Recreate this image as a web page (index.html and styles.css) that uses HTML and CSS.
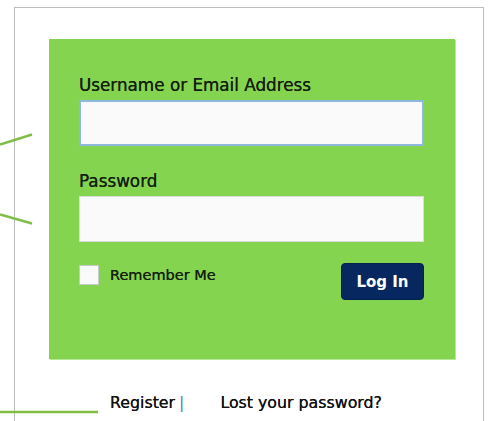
FILE: index.html
```html
<!DOCTYPE html>
<html lang="en">
<head>
<meta charset="utf-8">
<title>Log In</title>
<link rel="stylesheet" href="styles.css">
</head>
<body>
<div class="page">
  <div class="frame">
    <form class="login">
      <label class="field-label" for="user">Username or Email Address</label>
      <input class="field field-focus" id="user" type="text">
      <label class="field-label pw-label" for="pass">Password</label>
      <input class="field" id="pass" type="password">
      <div class="actions">
        <label class="remember"><span class="box"></span>Remember Me</label>
        <button class="submit" type="button">Log In</button>
      </div>
    </form>
    <p class="nav"><a class="link">Register</a><span class="sep">|</span><a class="link lost">Lost your password?</a></p>
  </div>
  <svg class="callouts" width="110" height="421" viewBox="0 0 110 421">
    <line x1="0" y1="137.5" x2="32" y2="127.5"/>
    <line x1="0" y1="207.5" x2="32" y2="216.5"/>
    <line x1="0" y1="405" x2="98" y2="405"/>
  </svg>
</div>
</body>
</html>
```
FILE: styles.css
```css
html, body {
  margin: 0;
  padding: 0;
  background: #fff;
  height: 100%;
  overflow: hidden;
}

.page {
  position: relative;
  height: 421px;
  font-family: "DejaVu Sans", Verdana, sans-serif;
  color: #111;
}

.frame {
  margin: 7px 0 0 14px;
  width: 470px;
  height: 414px;
  border: 1px solid #bdbdbd;
  border-bottom: none;
  box-sizing: border-box;
  padding: 31px 0 0 34px;
}

.login {
  width: 406px;
  height: 320px;
  box-sizing: border-box;
  background: #84d44f;
  padding: 37px 31px 0 30px;
  display: flex;
  flex-direction: column;
  box-shadow: 1px 1px 0 #b6e89a;
}

.field-label {
  font-size: 16.8px;
  line-height: 18px;
  color: #14200d;
  margin-bottom: 6px;
  text-shadow: 0 0 0.4px #14200d;
}

.pw-label {
  margin-top: 26px;
}

.field {
  height: 46px;
  box-sizing: border-box;
  margin: 0;
  border: 1px solid #dcdcdc;
  background: #fafafa;
  outline: none;
}

.field-focus {
  border: 2px solid #8fb8df;
}

.actions {
  margin-top: 21px;
  display: flex;
  justify-content: space-between;
  align-items: flex-start;
}

.remember {
  display: flex;
  align-items: center;
  gap: 11px;
  font-size: 14.5px;
  color: #14200d;
  margin-top: 2px;
  text-shadow: 0 0 0.4px #14200d;
}

.box {
  width: 20px;
  height: 20px;
  box-sizing: border-box;
  background: #fafafa;
  border: 1px solid #c9c9c9;
}

.submit {
  width: 83px;
  height: 37px;
  border: 1px solid #06204d;
  border-radius: 4px;
  background: #06275f;
  color: #fff;
  font-family: "DejaVu Sans", Verdana, sans-serif;
  font-weight: bold;
  font-size: 15px;
  padding: 0;
}

.nav {
  margin: 35px 0 0 61px;
  font-size: 15.8px;
  line-height: 18px;
  display: flex;
}

.link {
  color: #111;
  text-shadow: 0 0 0.4px #111;
}

.sep {
  color: #4a7fc0;
  margin-left: 4px;
}

.lost {
  margin-left: 36px;
}

.callouts {
  position: absolute;
  left: 0;
  top: 0;
  stroke: #7fbd45;
  stroke-width: 2.4;
}
```
